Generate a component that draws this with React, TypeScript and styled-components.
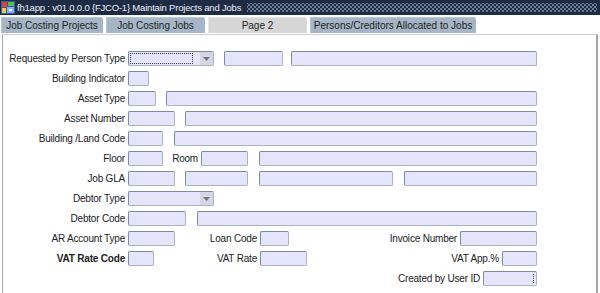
import React from "react";
import styled, { createGlobalStyle, css } from "styled-components";

const Global = createGlobalStyle`
  html, body { margin: 0; padding: 0; background: #ffffff; }
  body { font-family: "Liberation Sans", Arial, sans-serif; }
  #root { width: 600px; height: 293px; overflow: hidden; }
`;

const Window = styled.div`
  width: 600px;
  height: 293px;
  display: flex;
  flex-direction: column;
  background: #ffffff;
`;

const TitleBar = styled.div`
  height: 15px;
  flex: none;
  display: flex;
  align-items: center;
  background: #1e2b45;
  padding-left: 1px;
  padding-right: 3px;
`;

const TitleText = styled.span`
  color: #eef0f4;
  font-size: 9.5px;
  letter-spacing: -0.2px;
  margin-left: 2px;
  white-space: nowrap;
`;

const Dots = styled.div`
  flex: 1;
  height: 9px;
  margin-left: 6px;
  background-image:
    radial-gradient(circle, #6f7f98 0.7px, transparent 0.9px),
    radial-gradient(circle, #6f7f98 0.7px, transparent 0.9px);
  background-size: 4px 4px, 4px 4px;
  background-position: 0 0, 2px 2px;
`;

const TabBar = styled.div`
  height: 17px;
  margin-top: 2px;
  flex: none;
  display: flex;
  gap: 3px;
  padding-left: 1px;
`;

const Tab = styled.div<{ $w: number; $active?: boolean }>`
  width: ${(p) => p.$w}px;
  height: 16px;
  display: flex;
  align-items: center;
  justify-content: center;
  font-size: 10px;
  color: #1a1d22;
  background: ${(p) => (p.$active ? "#d6d6d6" : "#a7b6c6")};
  border-top-right-radius: 3px;
  box-shadow: inset 1px 1px 0 ${(p) => (p.$active ? "#e6e6e6" : "#b9c6d3")};
  white-space: nowrap;
`;

const Panel = styled.div`
  flex: 1;
  margin-left: 2px;
  width: 593px;
  border-left: 1px solid #a8a8a8;
  border-right: 2px solid #a4a4a4;
  border-top: 1px solid #cfcfcf;
  padding-top: 16px;
  display: flex;
  flex-direction: column;
`;

const Row = styled.div`
  height: 20px;
  display: flex;
  align-items: flex-start;
`;

const labelText = css`
  font-size: 10px;
  letter-spacing: -0.2px;
  color: #202224;
  line-height: 15px;
  height: 15px;
  text-align: right;
  white-space: nowrap;
  box-sizing: border-box;
  padding-right: 3px;
`;

const Label = styled.div<{ $bold?: boolean }>`
  ${labelText};
  width: 125px;
  flex: none;
  font-weight: ${(p) => (p.$bold ? 700 : 400)};
`;

const InlineLabel = styled.div<{ $w: number }>`
  ${labelText};
  width: ${(p) => p.$w}px;
  flex: none;
`;

const Field = styled.div<{ $w: number; $ml?: number }>`
  position: relative;
  width: ${(p) => p.$w}px;
  margin-left: ${(p) => p.$ml ?? 0}px;
  height: 15px;
  flex: none;
  box-sizing: border-box;
  background: #e4e4fb;
  border: 1px solid;
  border-color: #7d8ba0 #a9b2bf #a9b2bf #7d8ba0;
  border-radius: 2px;
`;

const SelectBox = styled(Field)`
  display: flex;
  overflow: hidden;
`;

const SelectBody = styled.div`
  flex: 1;
  position: relative;
`;

const Focus = styled.div`
  position: absolute;
  left: 1px;
  right: 7px;
  top: 1px;
  bottom: 1px;
  border: 1px dotted #3a3a50;
`;

const SelectArrow = styled.div`
  width: 13px;
  flex: none;
  background: #d4d6e4;
  display: flex;
  align-items: center;
  justify-content: center;
`;

const Grip = styled.div`
  position: absolute;
  right: 2px;
  top: 2px;
  bottom: 2px;
  width: 0;
  border-left: 1px dotted #50586a;
`;

const Arrow = () => (
  <svg width="7" height="4" viewBox="0 0 7 4">
    <path d="M0 0 H7 L3.5 4 Z" fill="#707480" />
  </svg>
);

const AppIcon = () => (
  <svg width="14" height="13" viewBox="0 0 14 13">
    <rect x="0" y="0" width="14" height="13" fill="#3a5a9a" />
    <rect x="1" y="1" width="5" height="5" fill="#e04040" />
    <rect x="7" y="1" width="6" height="4" fill="#50c050" />
    <rect x="1" y="7" width="4" height="5" fill="#f0d040" />
    <rect x="6" y="6" width="7" height="6" fill="#80b0ff" />
    <rect x="8" y="8" width="3" height="2" fill="#ffffff" />
  </svg>
);

const Select = ({ w, focused }: { w: number; focused?: boolean }) => (
  <SelectBox $w={w}>
    <SelectBody>{focused && <Focus />}</SelectBody>
    <SelectArrow>
      <Arrow />
    </SelectArrow>
  </SelectBox>
);

export default function App() {
  return (
    <>
      <Global />
      <Window>
        <TitleBar>
          <AppIcon />
          <TitleText>fh1app : v01.0.0.0 {"{FJCO-1}"} Maintain Projects and Jobs</TitleText>
          <Dots />
        </TitleBar>
        <TabBar>
          <Tab $w={102}>Job Costing Projects</Tab>
          <Tab $w={99}>Job Costing Jobs</Tab>
          <Tab $w={99} $active>
            Page 2
          </Tab>
          <Tab $w={166}>Persons/Creditors Allocated to Jobs</Tab>
        </TabBar>
        <Panel>
          <Row>
            <Label>Requested by Person Type</Label>
            <Select w={86} focused />
            <Field $w={59} $ml={10} />
            <Field $w={246} $ml={8} />
          </Row>
          <Row>
            <Label>Building Indicator</Label>
            <Field $w={21} />
          </Row>
          <Row>
            <Label>Asset Type</Label>
            <Field $w={28} />
            <Field $w={371} $ml={10} />
          </Row>
          <Row>
            <Label>Asset Number</Label>
            <Field $w={47} />
            <Field $w={352} $ml={10} />
          </Row>
          <Row>
            <Label>Building /Land Code</Label>
            <Field $w={35} />
            <Field $w={363} $ml={11} />
          </Row>
          <Row>
            <Label>Floor</Label>
            <Field $w={35} />
            <InlineLabel $w={38}>Room</InlineLabel>
            <Field $w={47} />
            <Field $w={278} $ml={11} />
          </Row>
          <Row>
            <Label>Job GLA</Label>
            <Field $w={47} />
            <Field $w={63} $ml={10} />
            <Field $w={134} $ml={11} />
            <Field $w={133} $ml={11} />
          </Row>
          <Row>
            <Label>Debtor Type</Label>
            <Select w={86} />
          </Row>
          <Row>
            <Label>Debtor Code</Label>
            <Field $w={58} />
            <Field $w={340} $ml={11} />
          </Row>
          <Row>
            <Label>AR Account Type</Label>
            <Field $w={47} />
            <InlineLabel $w={85}>Loan Code</InlineLabel>
            <Field $w={29} />
            <InlineLabel $w={171}>Invoice Number</InlineLabel>
            <Field $w={77} />
          </Row>
          <Row>
            <Label $bold>VAT Rate Code</Label>
            <Field $w={26} />
            <InlineLabel $w={106}>VAT Rate</InlineLabel>
            <Field $w={47} />
            <InlineLabel $w={195}>VAT App.%</InlineLabel>
            <Field $w={35} />
          </Row>
          <Row>
            <Label />
            <InlineLabel $w={355}>Created by User ID</InlineLabel>
            <Field $w={54}>
              <Grip />
            </Field>
          </Row>
        </Panel>
      </Window>
    </>
  );
}
